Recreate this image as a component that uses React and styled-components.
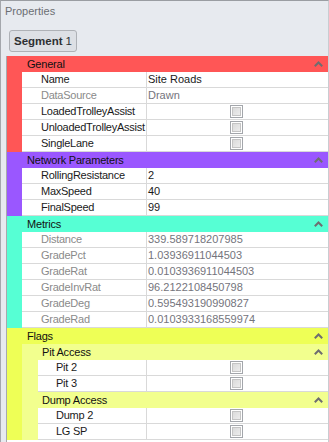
import React from 'react'
import styled, { createGlobalStyle } from 'styled-components'

const GlobalStyle = createGlobalStyle`
  html, body {
    margin: 0;
    padding: 0;
    background: #e7eaef;
  }
  * { box-sizing: border-box; }
`

const Window = styled.div`
  width: 329px;
  height: 442px;
  overflow: hidden;
  background: #e7eaef;
  border-top: 1px solid #9a9da2;
  border-left: 1px solid #a4a7ac;
  border-right: 1px solid #c9ccd1;
  font-family: "Liberation Sans", Arial, sans-serif;
  font-size: 11px;
  display: flex;
  flex-direction: column;
`

const Title = styled.div`
  color: #6b6e73;
  padding: 4px 0 0 4px;
  height: 29px;
`

const SegmentButton = styled.div`
  align-self: flex-start;
  margin-left: 8px;
  height: 22px;
  padding: 0 4px 0 4px;
  display: flex;
  align-items: center;
  gap: 3px;
  background: #dde0e5;
  border: 1px solid #aeb1b6;
  border-radius: 3px;
  color: #2e3033;
  font-size: 11.5px;
  b { font-weight: bold; }
`

const Grid = styled.div`
  margin: 4px 0 0 5px;
  border-left: 1px solid #a7a9ad;
  background: #fff;
  flex: 1;
`

const Header = styled.div`
  height: 16px;
  display: flex;
  align-items: center;
  justify-content: space-between;
  padding: 0 5px 0 ${p => p.$indent}px;
  background: ${p => p.$color};
  color: #111;
  letter-spacing: -0.2px;
`

const Body = styled.div`
  display: flex;
`

const Strip = styled.div`
  width: ${p => p.$width}px;
  flex-shrink: 0;
  background: ${p => p.$color};
`

const Rows = styled.div`
  flex: 1;
  display: flex;
  flex-direction: column;
`

const Row = styled.div`
  display: flex;
  height: 16px;
  border-bottom: 1px solid #d9d9d9;
  color: ${p => (p.$readonly ? '#8a8a8a' : '#1a1a1a')};
`

const Name = styled.div`
  flex: 1;
  padding-left: ${p => p.$pad}px;
  border-right: 1px solid #d9d9d9;
  line-height: 15px;
  letter-spacing: -0.25px;
  white-space: nowrap;
  overflow: hidden;
`

const Value = styled.div`
  width: 181px;
  flex-shrink: 0;
  padding-left: 1px;
  line-height: 15px;
  display: flex;
  align-items: center;
  justify-content: ${p => (p.$center ? 'center' : 'flex-start')};
  color: ${p => (p.$readonly ? '#74747c' : 'inherit')};
`

const Check = styled.span`
  width: 13px;
  height: 13px;
  margin-right: 3px;
  border: 1px solid #a3a6ab;
  background: linear-gradient(135deg, #d6d6d6, #f1f1f1);
  box-shadow: inset 0 0 0 1px #fff, inset 0 0 0 2px #c4c4c4;
`

const Chevron = () => (
  <svg width="9" height="6" viewBox="0 0 9 6">
    <path d="M0.8 5.2 L4.5 1.5 L8.2 5.2" fill="none" stroke="#6e6e70" strokeWidth="2" />
  </svg>
)

const Group = ({ title, color, children, sub }) => (
  <div>
    <Header $color={color} $indent={20}>
      <span>{title}</span>
      <Chevron />
    </Header>
    <Body>
      <Strip $color={color} $width={sub ? 16 : 15} />
      <Rows>{children}</Rows>
    </Body>
  </div>
)

const Prop = ({ name, value, check, readonly, pad = 19 }) => (
  <Row $readonly={readonly}>
    <Name $pad={pad}>{name}</Name>
    <Value $center={check} $readonly={readonly}>
      {check ? <Check /> : value}
    </Value>
  </Row>
)

const metrics = [
  ['Distance', '339.589718207985'],
  ['GradePct', '1.03936911044503'],
  ['GradeRat', '0.0103936911044503'],
  ['GradeInvRat', '96.2122108450798'],
  ['GradeDeg', '0.595493190990827'],
  ['GradeRad', '0.0103933168559974'],
]

export default function App() {
  return (
    <Window>
      <GlobalStyle />
      <Title>Properties</Title>
      <SegmentButton>
        <b>Segment</b>
        <span>1</span>
      </SegmentButton>
      <Grid>
        <Group title="General" color="#ff5656">
          <Prop name="Name" value="Site Roads" />
          <Prop name="DataSource" value="Drawn" readonly />
          <Prop name="LoadedTrolleyAssist" check />
          <Prop name="UnloadedTrolleyAssist" check />
          <Prop name="SingleLane" check />
        </Group>
        <Group title="Network Parameters" color="#9a57ff">
          <Prop name="RollingResistance" value="2" />
          <Prop name="MaxSpeed" value="40" />
          <Prop name="FinalSpeed" value="99" />
        </Group>
        <Group title="Metrics" color="#56ffd4">
          {metrics.map(([n, v]) => (
            <Prop key={n} name={n} value={v} readonly />
          ))}
        </Group>
        <Group title="Flags" color="#eeff56">
          <Group title="Pit Access" color="#f2ff8e" sub>
            <Prop name="Pit 2" check pad={18} />
            <Prop name="Pit 3" check pad={18} />
          </Group>
          <Group title="Dump Access" color="#f2ff8e" sub>
            <Prop name="Dump 2" check pad={18} />
            <Prop name="LG SP" check pad={18} />
          </Group>
        </Group>
      </Grid>
    </Window>
  )
}
